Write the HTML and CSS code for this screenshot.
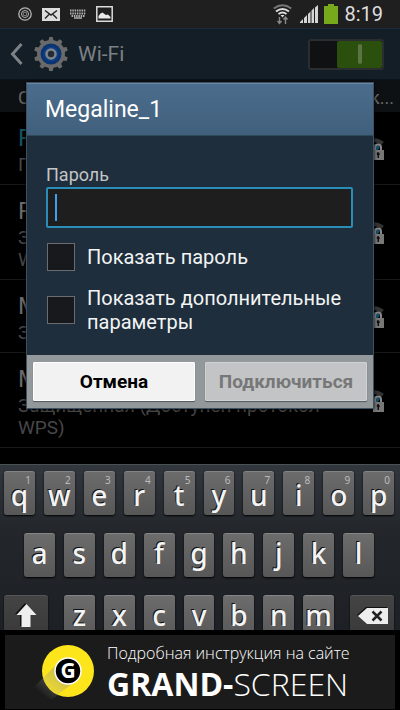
FILE: index.html
```
<!DOCTYPE html>
<html lang="ru">
<head>
    <meta charset="UTF-8">
    <meta name="viewport" content="width=device-width, initial-scale=1.0">
    <title>Wi-Fi</title>
    <link rel="stylesheet" href="styles.css">
</head>
<body>

    <!-- Символы, которые повторяются в списке -->
    <svg width="0" height="0" class="sprite">
        <symbol id="net-lock" viewBox="0 0 24 24">
            <path d="M1 5Q12-3 23 5L20 8Q12 2 4 8z" fill="#333"/>
            <path d="M5 10Q12 4 19 10L12 20z" fill="#14506a"/>
            <path d="M14 13V10.500a3 3 0 0 1 6 0V13" fill="none" stroke="#858585" stroke-width="2"/>
            <rect x="12" y="13" width="11" height="10" fill="#777"/>
            <path d="M17 15a2 2 0 0 1 1 3.500V21h-1.500v-2.500A2 2 0 0 1 17 15z" fill="#111"/>
        </symbol>
    </svg>

    <div class="phone">
        <div class="status-bar">
            <div class="status-icons">
                <svg width="14" height="14" viewBox="0 0 14 14" fill="none" stroke="#b5b5b5">
                    <circle cx="7" cy="7" r="6.200" stroke-width="1.300"/>
                    <circle cx="7" cy="7" r="3.500"/>
                    <path d="M5.500 5.500h3v3h-3z" stroke="#777"/>
                </svg>
                <svg width="18" height="13" viewBox="0 0 18 13">
                    <path d="M0 0h18v13H0z" fill="#dcdcdc"/>
                    <path d="M3 2.500l6 4.500 6-4.500M3 10.500l4-4M15 10.500l-4-4" fill="none" stroke="#222" stroke-width="1.400"/>
                </svg>
                <svg width="16" height="10" viewBox="0 0 16 10" fill="none" stroke="#b0b0b0" stroke-width="1.800">
                    <path d="M0 1.500h16M0 4.500h16M1.500 7h13" stroke-dasharray="1.500 .8"/>
                    <path d="M4 9h8" stroke-width="1.500"/>
                </svg>
                <svg width="17" height="16" viewBox="0 0 17 16">
                    <path d="M.8.8h15.400v14.400H.8z" fill="none" stroke="#dcdcdc" stroke-width="1.500"/>
                    <path d="M2.500 12.500V10l2-2.500 2-1 2 1.500 1.500 1 2-.5 2.500 2.500v1.500z" fill="#e8e8e8"/>
                </svg>
            </div>
            <div class="status-info">
                <svg width="19" height="21" viewBox="0 0 19 21" fill="none">
                    <path d="M.8 4.500Q9.500-2 18.200 4.500" stroke="#777" stroke-width="2"/>
                    <path d="M3 7.500Q9.500 2.500 16 7.500M5.500 10Q9.500 7 13.500 10" stroke="#ddd" stroke-width="2"/>
                    <path d="M7.500 11h4l-2 2.500z" fill="#ddd"/>
                    <path d="M6.500 13v6M4.500 17l2 2.500 2-2.500M12.500 20v-6M10.500 15.500l2-2.500 2 2.500" stroke="#888" stroke-width="1.400"/>
                </svg>
                <svg width="18" height="18" viewBox="0 0 18 18" fill="#d5d5d5">
                    <path d="M0 18v-1l3-3v4zM4 18v-5l3-3v8zM8 18V9l2.500-2.500V18zM11.500 18V5.500L14 3v15zM15 18V2.500L18 0v18z"/>
                </svg>
                <svg width="14" height="20" viewBox="0 0 14 20">
                    <path d="M0 2h4V0h6v2h4v18H0z" fill="#78a81c"/>
                </svg>
                <span class="clock">8:19</span>
            </div>
        </div>

        <div class="action-bar">
            <button class="back-button" aria-label="Назад">
                <svg width="13" height="22" viewBox="0 0 13 22">
                    <path d="M11.500 1L2.500 11l9 10" fill="none" stroke="#7d8286" stroke-width="3"/>
                </svg>
            </button>
            <svg class="gear" width="34" height="34" viewBox="-17 -17 34 34">
                <g fill="#6a6a6a">
                    <circle r="14"/>
                    <path d="M-2.500-13l.7-4h3.600l.7 4zM-2.500 13l.7 4h3.600l.7-4z"/>
                    <path d="M-2.500-13l.7-4h3.600l.7 4zM-2.500 13l.7 4h3.600l.7-4z" transform="rotate(36)"/>
                    <path d="M-2.500-13l.7-4h3.600l.7 4zM-2.500 13l.7 4h3.600l.7-4z" transform="rotate(72)"/>
                    <path d="M-2.500-13l.7-4h3.600l.7 4zM-2.500 13l.7 4h3.600l.7-4z" transform="rotate(108)"/>
                    <path d="M-2.500-13l.7-4h3.600l.7 4zM-2.500 13l.7 4h3.600l.7-4z" transform="rotate(144)"/>
                </g>
                <circle r="10.500" fill="#0c3470"/>
                <circle r="7.500" fill="#0d3f88"/>
                <circle r="4.500" fill="#222c36" stroke="#7f8488" stroke-width="2.500"/>
            </svg>
            <h1 class="page-title">Wi-Fi</h1>
            <button class="switch" role="switch" aria-checked="true" aria-label="Wi-Fi">
                <span class="switch-thumb"></span>
            </button>
        </div>

        <div class="list-header">
            <span>С</span>
            <span>к...</span>
        </div>

        <ul class="networks">
            <li class="network connected">
                <div class="network-text">
                    <div class="network-name">P</div>
                    <div class="network-info">П</div>
                </div>
                <svg class="network-icon"><use href="#net-lock"/></svg>
            </li>
            <li class="network">
                <div class="network-text">
                    <div class="network-name">R</div>
                    <div class="network-info">З<br>W</div>
                </div>
                <svg class="network-icon"><use href="#net-lock"/></svg>
            </li>
            <li class="network">
                <div class="network-text">
                    <div class="network-name">M</div>
                    <div class="network-info">З</div>
                </div>
                <svg class="network-icon"><use href="#net-lock"/></svg>
            </li>
            <li class="network">
                <div class="network-text">
                    <div class="network-name">M</div>
                    <div class="network-info">Защищенная (Доступен протокол WPS)</div>
                </div>
                <svg class="network-icon"><use href="#net-lock"/></svg>
            </li>
        </ul>

        <div class="keyboard">
            <div class="key-row top-row">
                <button class="key"><sup>1</sup>q</button>
                <button class="key"><sup>2</sup>w</button>
                <button class="key"><sup>3</sup>e</button>
                <button class="key"><sup>4</sup>r</button>
                <button class="key"><sup>5</sup>t</button>
                <button class="key"><sup>6</sup>y</button>
                <button class="key"><sup>7</sup>u</button>
                <button class="key"><sup>8</sup>i</button>
                <button class="key"><sup>9</sup>o</button>
                <button class="key"><sup>0</sup>p</button>
            </div>
            <div class="key-row middle-row">
                <button class="key">a</button>
                <button class="key">s</button>
                <button class="key">d</button>
                <button class="key">f</button>
                <button class="key">g</button>
                <button class="key">h</button>
                <button class="key">j</button>
                <button class="key">k</button>
                <button class="key">l</button>
            </div>
            <div class="key-row">
                <button class="key wide-key shift" aria-label="Shift">
                    <svg width="22" height="25" viewBox="0 0 22 25">
                        <path d="M10 0L0 11h5v12h9V11h6z" fill="#111"/>
                        <path d="M11.500 1L1.500 12h5v12h9V12h6z" fill="#eee"/>
                    </svg>
                </button>
                <button class="key">z</button>
                <button class="key">x</button>
                <button class="key">c</button>
                <button class="key">v</button>
                <button class="key">b</button>
                <button class="key">n</button>
                <button class="key">m</button>
                <button class="key wide-key backspace" aria-label="Удалить">
                    <svg width="31" height="17" viewBox="0 0 31 17">
                        <path d="M0 8L9 0h21v16H9z" fill="#111"/>
                        <path d="M1 9l9-8h21v16H10z" fill="#eee"/>
                        <path d="M15.500 4.500l9 9M24.500 4.500l-9 9" stroke="#222" stroke-width="2.500"/>
                    </svg>
                </button>
            </div>
        </div>

        <div class="banner">
            <a href="#" class="banner-link">
                <svg class="banner-logo" width="60" height="56" viewBox="-34 -27 60 56">
                    <defs>
                        <linearGradient id="shade" x1="1" y1="0" x2="0" y2="1">
                            <stop offset="0.300" stop-color="#a9a46a" stop-opacity=".6"/>
                            <stop offset="0.850" stop-color="#999" stop-opacity="0"/>
                        </linearGradient>
                    </defs>
                    <circle r="26" fill="#fde51c"/>
                    <path d="M-9-9L-34 16l17 13L9 9z" fill="url(#shade)"/>
                    <circle r="13" fill="#000" stroke="#fff" stroke-width="1.500"/>
                    <text class="logo-letter" x="0" y="7" text-anchor="middle">G</text>
                </svg>
                <span class="banner-text">
                    <span class="banner-note">Подробная инструкция на сайте</span>
                    <span class="banner-name"><b>GRAND-</b>SCREEN</span>
                </span>
            </a>
        </div>

        <!-- Окно ввода пароля -->
        <form class="dialog" role="dialog" aria-labelledby="dialog-title">
            <h2 class="dialog-title" id="dialog-title">Megaline_1</h2>
            <div class="dialog-body">
                <label class="field-label" for="password">Пароль</label>
                <div class="field">
                    <input class="field-input" type="password" id="password">
                    <span class="caret"></span>
                </div>
                <div class="option">
                    <input type="checkbox" id="show-password">
                    <label for="show-password">Показать пароль</label>
                </div>
                <div class="option">
                    <input type="checkbox" id="show-extra">
                    <label for="show-extra">Показать дополнительные параметры</label>
                </div>
            </div>
            <div class="dialog-buttons">
                <button type="button" class="dialog-button">Отмена</button>
                <button type="submit" class="dialog-button" disabled>Подключиться</button>
            </div>
        </form>
    </div>

</body>
</html>
```
FILE: styles.css
```
* {
    box-sizing: border-box;
}

body {
    margin: 0;
    background-color: #000;
    font-family: Roboto, sans-serif;
}

button {
    font-family: inherit;
    padding: 0;
    border: none;
    background: none;
}

.sprite {
    position: absolute;
}

.phone {
    position: relative;
    display: flex;
    flex-direction: column;
    height: 100vh;
    overflow: hidden;
}

/* Строка состояния */
.status-bar {
    display: flex;
    justify-content: space-between;
    align-items: center;
    height: 28px;
    padding: 0 17px 0 18px;
    background-color: #1f1f1f;
}

.status-icons {
    display: flex;
    align-items: center;
    gap: 10px;
}

.status-info {
    display: flex;
    align-items: center;
    gap: 6px;
}

.status-info svg:first-child {
    margin-right: 2px;
}

.clock {
    font-size: 20px;
    line-height: 28px;
    color: #dedede;
}

/* Шапка */
.action-bar {
    display: flex;
    align-items: center;
    height: 52px;
    padding: 0 16px 0 10px;
    background-color: #141e27;
    border-top: 1px solid #1a2a38;
    border-bottom: 1px solid #0c1319;
}

.back-button {
    display: flex;
}

.gear {
    margin-left: 11px;
}

.page-title {
    flex: 1;
    margin: 0 0 0 10px;
    font-size: 21px;
    font-weight: 400;
    color: #7d8083;
}

.switch {
    display: flex;
    justify-content: flex-end;
    width: 76px;
    height: 31px;
    border: 2px solid #2a2e31;
    border-radius: 3px;
    background-color: #101113;
}

.switch-thumb {
    display: flex;
    justify-content: center;
    align-items: center;
    width: 45px;
    height: 27px;
    border-radius: 2px;
    background-color: #2b500d;
}

.switch-thumb::after {
    content: "";
    width: 4px;
    height: 20px;
    border-radius: 2px;
    background-color: #5b7345;
}

/* Список сетей */
.list-header {
    display: flex;
    justify-content: space-between;
    align-items: center;
    height: 32px;
    padding: 2px 6px 0 18px;
    background-color: #0d1114;
    font-size: 18px;
    color: #666;
}

.networks {
    flex: 1;
    min-height: 0;
    margin: 0;
    padding: 0;
    overflow: hidden;
    list-style: none;
}

.network {
    display: flex;
    align-items: center;
    padding: 10px 15px 8px 18px;
    border-bottom: 1px solid #191919;
}

.network-text {
    flex: 1;
}

.network-name {
    font-size: 24px;
    line-height: 32px;
    color: #6a6a6a;
}

.connected .network-name {
    color: #155264;
}

.network-info {
    font-size: 19px;
    line-height: 22px;
    color: #454749;
}

.network-icon {
    width: 24px;
    height: 24px;
}

/* Клавиатура */
.keyboard {
    display: flex;
    flex-direction: column;
    gap: 18px;
    overflow: hidden;
    padding: 6px 6px 0 4px;
    border-top: 1px solid #4b5055;
    background: linear-gradient(#32373d, #23272c 40%, #1d2024);
}

.key-row {
    display: flex;
    gap: 9px;
}

.middle-row {
    padding: 0 20px;
}

/* Нижний ряд уходит под баннер */
.key-row:last-child {
    margin-bottom: -9px;
}

.key {
    position: relative;
    flex: 1;
    height: 44px;
    padding-bottom: 6px;
    border-top: 1px solid #858585;
    border-radius: 3px;
    background: linear-gradient(#6c6c6c, #575757);
    box-shadow: 0 1px 2px #000;
    font-family: "Noto Sans", sans-serif;
    font-size: 28px;
    font-weight: 500;
    line-height: 36px;
    color: #f4f4f4;
    text-shadow: -1px -1px 0 #111;
}

.top-row .key {
    padding-top: 4px;
    padding-bottom: 2px;
}

.key sup {
    position: absolute;
    top: 2px;
    right: 4px;
    font-size: 10px;
    font-weight: 400;
    line-height: 12px;
    color: #bbb;
    text-shadow: none;
}

.wide-key {
    display: flex;
    flex: none;
    justify-content: center;
    align-items: flex-start;
    width: 44px;
    padding-top: 7px;
    border-top-color: #555;
    background: linear-gradient(#444, #383838);
}

.shift {
    margin-right: 7px;
}

.backspace {
    margin-left: 7px;
    padding-top: 11px;
}

/* Баннер */
.banner {
    padding: 5px 5px 1px;
    background-color: #000;
}

.banner-link {
    display: flex;
    align-items: center;
    gap: 13px;
    height: 74px;
    padding-left: 29px;
    background-color: #1b1b1b;
    color: #fff;
    text-decoration: none;
}

.banner-text {
    display: flex;
    flex-direction: column;
    font-family: "Open Sans", sans-serif;
    font-weight: 300;
    white-space: nowrap;
}

.banner-note {
    font-size: 16px;
    line-height: 24px;
}

.banner-name {
    font-size: 32px;
    line-height: 38px;
}

.banner-name b {
    font-weight: 700;
}

.logo-letter {
    font-family: "Open Sans", sans-serif;
    font-size: 21px;
    font-weight: 700;
    fill: #fff;
}

/* Диалог */
.dialog {
    position: absolute;
    top: 82px;
    left: 26px;
    right: 26px;
    border: 1px solid #3d5163;
    background-color: #1f2e3c;
    box-shadow: 0 0 3px #000;
}

.dialog-title {
    margin: 0;
    padding: 0 18px;
    border-top: 1px solid #6886a3;
    border-bottom: 1px solid #2e4a57;
    background: linear-gradient(#4b6c8c, #41607d);
    font-size: 23px;
    font-weight: 400;
    line-height: 51px;
    color: #fff;
}

.dialog-body {
    padding: 26px 20px 21px 19px;
}

.field-label {
    display: block;
    font-size: 18px;
    line-height: 25px;
    color: #c3c5c7;
}

.field {
    position: relative;
    margin-bottom: 15px;
}

.field-input {
    display: block;
    width: 100%;
    height: 41px;
    padding: 0 8px;
    border: 2px solid #2a8db8;
    border-radius: 2px;
    outline: none;
    background-color: #1e1e1e;
    color: #fff;
    font-size: 20px;
}

.caret {
    position: absolute;
    top: 7px;
    left: 9px;
    width: 2px;
    height: 27px;
    background-color: #3fa0ee;
}

.option {
    display: flex;
    align-items: center;
    gap: 12px;
    margin-bottom: 15px;
    padding-left: 1px;
    font-size: 20px;
    line-height: 24px;
    color: #f2f4f5;
}

.option:last-child {
    margin-bottom: 0;
}

.option input {
    flex: none;
    width: 28px;
    height: 28px;
    margin: 0;
    appearance: none;
    border: 1px solid #6a6c6f;
    background-color: #17191d;
}

.option input:checked {
    background-color: #2a8db8;
}

.dialog-buttons {
    display: flex;
    gap: 10px;
    padding: 7px 6px;
    background-color: #93989b;
}

.dialog-button {
    flex: 1;
    height: 39px;
    border: 1px solid #fff;
    border-radius: 1px;
    background-color: #f2f2f2;
    box-shadow: 0 1px 1px #55595c;
    font-size: 19px;
    font-weight: 700;
    color: #000;
}

.dialog-button:disabled {
    border-color: #cfd1d2;
    background-color: #c2c4c6;
    color: #777;
}
```
